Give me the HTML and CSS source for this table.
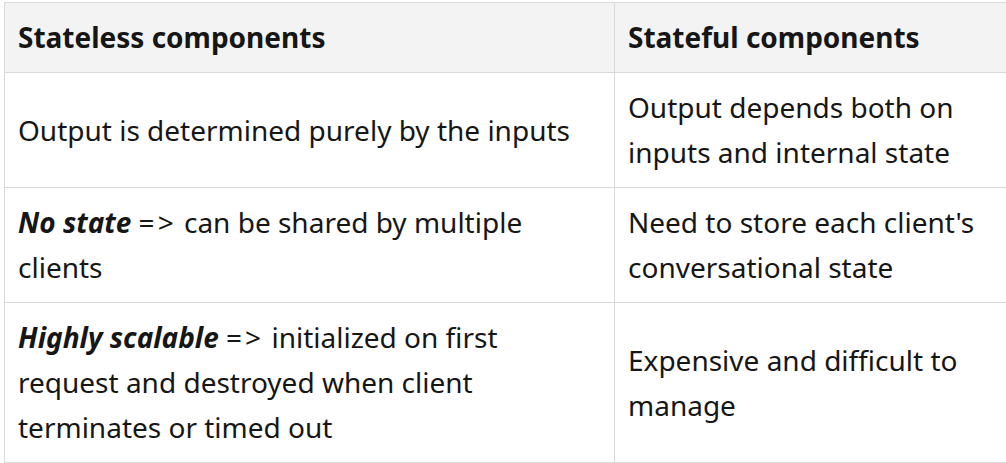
FILE: index.html
```html
<!DOCTYPE html>
<html>
<head>
<meta charset="utf-8">
<link rel="stylesheet" href="styles.css">
</head>
<body>
<table class="cmp">
  <thead>
    <tr><th class="c1">Stateless components</th><th class="c2">Stateful components</th></tr>
  </thead>
  <tbody>
    <tr><td>Output is determined purely by the inputs</td><td>Output depends both on inputs and internal state</td></tr>
    <tr><td><strong><em>No state</em></strong> <span class="arrow">=&gt;</span> can be shared by multiple clients</td><td>Need to store each client's conversational state</td></tr>
    <tr><td><strong><em>Highly scalable</em></strong> <span class="arrow">=&gt;</span> initialized on first request and destroyed when client terminates or timed out</td><td>Expensive and difficult to manage</td></tr>
  </tbody>
</table>
</body>
</html>
```
FILE: styles.css
```css
html, body { margin: 0; padding: 0; background: #fff; overflow: hidden; }
body { padding: 2px 0 0 4px; font-family: "Noto Sans", "Open Sans", sans-serif; color: #161616; }
.cmp { border-collapse: collapse; width: 1010px; table-layout: fixed; font-size: 28px; line-height: 45px; }
.cmp th, .cmp td { border: 1px solid #d9d9d9; padding: 12px 13px; text-align: left; vertical-align: middle; }
.cmp th { background: #f3f3f3; font-weight: 700; }
.cmp .c1 { width: 583px; }
.cmp strong { font-weight: 700; }
.cmp .arrow { letter-spacing: 3px; }
```
